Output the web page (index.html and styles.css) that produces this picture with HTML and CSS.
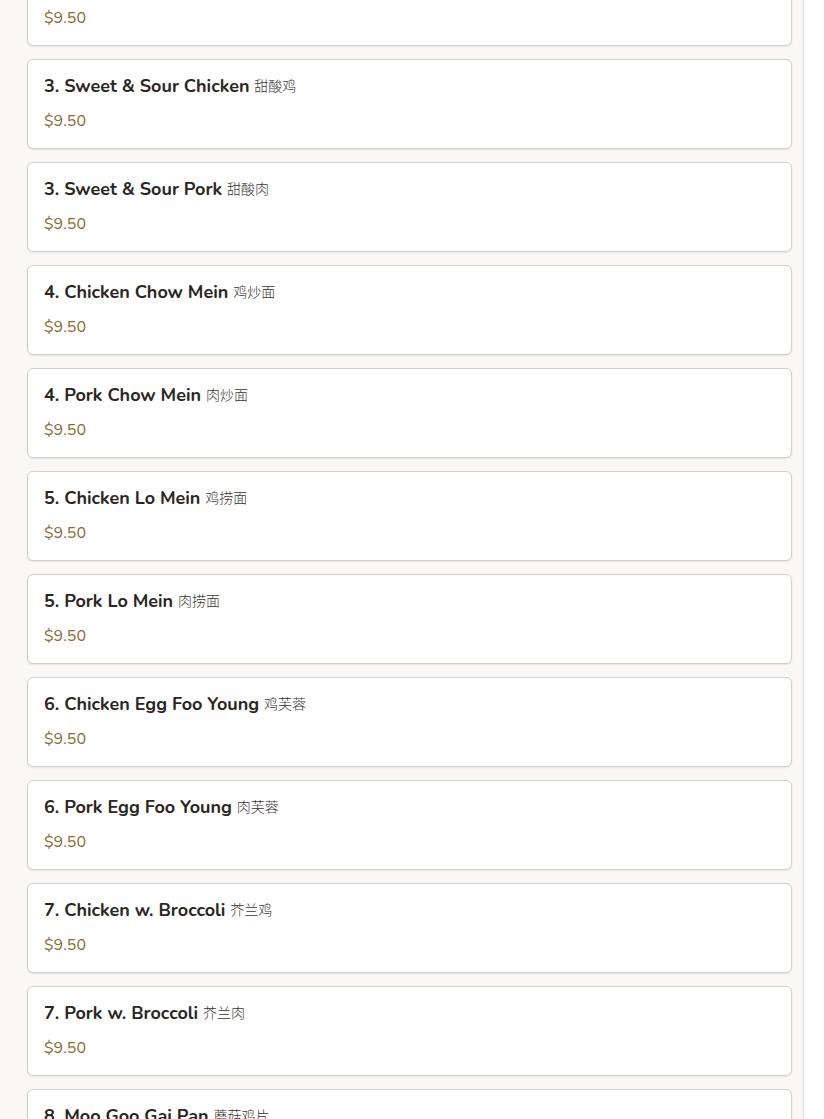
FILE: index.html
```html
<!DOCTYPE html>
<html lang="en">
<head>
<meta charset="utf-8">
<title>Menu</title>
<link rel="stylesheet" href="styles.css">
</head>
<body>
<main class="page">
  <ul class="menu-list">
    <li class="card"><h3 class="item-name">2. Pork Fried Rice <span class="zh">肉炒饭</span></h3><p class="price">$9.50</p></li>
    <li class="card"><h3 class="item-name">3. Sweet &amp; Sour Chicken <span class="zh">甜酸鸡</span></h3><p class="price">$9.50</p></li>
    <li class="card"><h3 class="item-name">3. Sweet &amp; Sour Pork <span class="zh">甜酸肉</span></h3><p class="price">$9.50</p></li>
    <li class="card"><h3 class="item-name">4. Chicken Chow Mein <span class="zh">鸡炒面</span></h3><p class="price">$9.50</p></li>
    <li class="card"><h3 class="item-name">4. Pork Chow Mein <span class="zh">肉炒面</span></h3><p class="price">$9.50</p></li>
    <li class="card"><h3 class="item-name">5. Chicken Lo Mein <span class="zh">鸡捞面</span></h3><p class="price">$9.50</p></li>
    <li class="card"><h3 class="item-name">5. Pork Lo Mein <span class="zh">肉捞面</span></h3><p class="price">$9.50</p></li>
    <li class="card"><h3 class="item-name">6. Chicken Egg Foo Young <span class="zh">鸡芙蓉</span></h3><p class="price">$9.50</p></li>
    <li class="card"><h3 class="item-name">6. Pork Egg Foo Young <span class="zh">肉芙蓉</span></h3><p class="price">$9.50</p></li>
    <li class="card"><h3 class="item-name">7. Chicken w. Broccoli <span class="zh">芥兰鸡</span></h3><p class="price">$9.50</p></li>
    <li class="card"><h3 class="item-name">7. Pork w. Broccoli <span class="zh">芥兰肉</span></h3><p class="price">$9.50</p></li>
    <li class="card"><h3 class="item-name">8. Moo Goo Gai Pan <span class="zh">蘑菇鸡片</span></h3><p class="price">$9.50</p></li>
  </ul>
</main>
</body>
</html>
```
FILE: styles.css
```css
html, body {
  margin: 0;
  padding: 0;
  background: #ffffff;
}
body {
  font-family: "Nunito", "Lato", "Noto Sans CJK SC", sans-serif;
  overflow: hidden;
}
.page {
  box-sizing: border-box;
  width: 804px;
  min-height: 1119px;
  background: #f9f8f6;
  border-right: 1px solid #dcdcdc;
  padding: 0 11px 0 27px;
}
.menu-list {
  list-style: none;
  margin: -44px 0 0 0;
  padding: 0;
  display: flex;
  flex-direction: column;
  gap: 13px;
}
.card {
  box-sizing: border-box;
  height: 90px;
  background: #ffffff;
  border: 1px solid #d3d0cc;
  border-radius: 6px;
  box-shadow: 0 1px 2px rgba(0, 0, 0, 0.08);
  padding: 15px 16px 0 16px;
}
.item-name {
  margin: 0;
  font-size: 18px;
  line-height: 20px;
  font-weight: 700;
  color: #2a2622;
}
.zh {
  font-family: "Noto Sans CJK SC", sans-serif;
  font-weight: 300;
  font-size: 14px;
  color: #3a3632;
  vertical-align: 1px;
}
.price {
  margin: 13px 0 0 0;
  font-size: 16px;
  line-height: 24px;
  color: #8a6a30;
}
```
